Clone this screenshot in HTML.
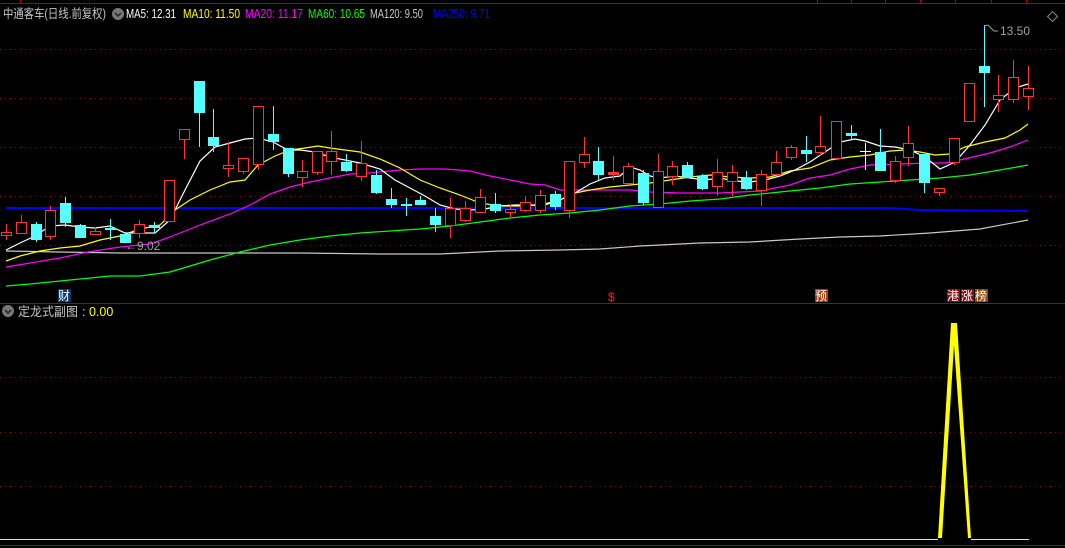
<!DOCTYPE html>
<html><head><meta charset="utf-8"><style>
html,body{margin:0;padding:0;background:#000;width:1065px;height:548px;overflow:hidden}
svg{display:block}
text{font-family:"Liberation Sans","Noto Sans CJK SC",sans-serif}
</style></head><body>
<svg width="1065" height="548" viewBox="0 0 1065 548" xmlns="http://www.w3.org/2000/svg" shape-rendering="crispEdges">
<rect width="1065" height="548" fill="#000"/>
<line x1="0" y1="3.5" x2="1065" y2="3.5" stroke="#b00000"/>
<g stroke="#b00000"><line x1="20.5" y1="0" x2="20.5" y2="3"/><line x1="817.5" y1="0" x2="817.5" y2="3"/><line x1="851.5" y1="0" x2="851.5" y2="3"/><line x1="885.5" y1="0" x2="885.5" y2="3"/><line x1="920.5" y1="0" x2="920.5" y2="3"/><line x1="955.5" y1="0" x2="955.5" y2="3"/><line x1="991.5" y1="0" x2="991.5" y2="3"/><line x1="1026.5" y1="0" x2="1026.5" y2="3"/></g>
<g stroke="#8a0000" stroke-dasharray="1 4">
<line x1="0" y1="49.5" x2="1065" y2="49.5"/><line x1="0" y1="98.5" x2="1065" y2="98.5"/><line x1="0" y1="147.5" x2="1065" y2="147.5"/><line x1="0" y1="196.5" x2="1065" y2="196.5"/><line x1="0" y1="245.5" x2="1065" y2="245.5"/>
<line x1="0" y1="377.5" x2="1065" y2="377.5"/><line x1="0" y1="432.5" x2="1065" y2="432.5"/><line x1="0" y1="486.5" x2="1065" y2="486.5"/>
</g>
<line x1="0" y1="303.5" x2="1065" y2="303.5" stroke="#b00000"/>
<line x1="0" y1="545.5" x2="1065" y2="545.5" stroke="#b00000"/>

<g fill="none" stroke-width="1.2" shape-rendering="auto">
<polyline stroke="#c8c8c8" points="6,251 60,252 120,253 180,253 300,253 380,254 440,254 500,251 560,250 600,249 640,246 700,243 750,242 800,239 840,237 880,236 930,233 980,229 1028,220"/>
<polyline stroke="#0000ff" stroke-width="2" points="6,208 888,208 920,210 1028,211"/>
<polyline stroke="#00ff00" points="6,286 30,284 60,281 90,278 110,276 140,276 170,272 190,266 210,260 240,252 270,245 300,240 330,236 360,233 390,231 420,229 450,226 480,222 510,218 540,215 570,213 600,210 630,206 660,204 690,201 720,199 750,195 780,192 800,190 820,188 850,184 880,182 910,180 940,178 970,175 1000,170 1028,165"/>
<polyline stroke="#ff00ff" points="6,267 30,263 60,258 88,252 120,247 150,244 170,237 200,225 230,214 250,205 270,194 290,187 310,182 330,178 350,174 370,173 380,172 400,170 420,169 445,169 470,171 490,176 510,180 530,184 545,185 560,190 580,190 600,190 630,190 650,192 680,193 720,193 760,191 790,185 810,178 830,175 850,169 870,165 900,164 930,163 945,163 960,160 990,153 1010,147 1028,140"/>
<polyline stroke="#ffff00" points="6,261 20,256 40,251 60,248 80,246 100,240 120,236 140,229 160,225 175,210 190,200 210,190 230,182 245,180 258,165 275,156 290,150 305,148 318,146 330,148 345,150 360,152 380,159 400,168 420,180 440,188 460,195 480,203 500,206 520,206 540,205 560,200 575,193 590,190 610,187 630,185 650,183 670,180 690,177 710,175 730,177 750,178 770,177 790,171 810,168 830,160 850,157 870,155 890,151 905,150 920,152 935,155 950,154 965,147 985,142 1005,138 1020,130 1028,124"/>
<polyline stroke="#ffffff" points="6,250 20,243 35,236 50,226 65,225 80,227 95,228 110,226 125,233 140,233 155,233 170,220 185,190 200,161 215,147 230,143 245,139 258,138 273,142 288,150 300,150 315,152 330,157 345,160 360,163 380,169 395,180 410,188 425,196 440,205 455,209 470,210 485,209 500,206 515,205 530,205 545,205 560,200 575,193 590,184 605,178 620,176 630,167 640,170 650,176 660,178 675,176 690,178 705,180 720,178 735,181 750,182 765,180 780,176 795,170 810,162 825,152 840,142 855,139 865,141 880,146 895,147 910,150 925,157 940,169 955,162 970,145 985,125 1000,100 1015,88 1028,84"/>
</g>

<g stroke="#ff3333" fill="#000">
<line x1="6.5" y1="224" x2="6.5" y2="240"/><rect x="1.5" y="232.5" width="10" height="3"/>
<line x1="21.5" y1="215" x2="21.5" y2="233"/><rect x="16.5" y="222.5" width="10" height="11"/>
<line x1="50.5" y1="206" x2="50.5" y2="240"/><rect x="45.5" y="210.5" width="10" height="26"/>
<line x1="95.5" y1="227" x2="95.5" y2="235"/><rect x="90.5" y="231.5" width="10" height="3"/>
<line x1="139.5" y1="220" x2="139.5" y2="238"/><rect x="134.5" y="224.5" width="10" height="9"/>
<rect x="164.5" y="180.5" width="10" height="41"/>
<line x1="184.5" y1="139" x2="184.5" y2="159"/><rect x="179.5" y="129.5" width="10" height="10"/>
<line x1="228.5" y1="142" x2="228.5" y2="177"/><rect x="223.5" y="165.5" width="10" height="3"/>
<line x1="243.5" y1="158" x2="243.5" y2="174"/><rect x="238.5" y="158.5" width="10" height="13"/>
<line x1="258.5" y1="106" x2="258.5" y2="170"/><rect x="253.5" y="106.5" width="10" height="58"/>
<line x1="302.5" y1="160" x2="302.5" y2="187"/><rect x="297.5" y="171.5" width="10" height="6"/>
<line x1="317.5" y1="151" x2="317.5" y2="175"/><rect x="312.5" y="151.5" width="10" height="21"/>
<line x1="331.5" y1="131" x2="331.5" y2="175"/><rect x="326.5" y="151.5" width="10" height="10"/>
<line x1="361.5" y1="141" x2="361.5" y2="181"/><rect x="356.5" y="163.5" width="10" height="13"/>
<line x1="450.5" y1="198" x2="450.5" y2="238"/><rect x="445.5" y="208.5" width="10" height="17"/>
<line x1="465.5" y1="201" x2="465.5" y2="222"/><rect x="460.5" y="208.5" width="10" height="12"/>
<line x1="480.5" y1="189" x2="480.5" y2="213"/><rect x="475.5" y="197.5" width="10" height="15"/>
<line x1="510.5" y1="205" x2="510.5" y2="218"/><rect x="505.5" y="209.5" width="10" height="3"/>
<line x1="525.5" y1="196" x2="525.5" y2="212"/><rect x="520.5" y="202.5" width="10" height="8"/>
<line x1="540.5" y1="190" x2="540.5" y2="213"/><rect x="535.5" y="195.5" width="10" height="15"/>
<line x1="569.5" y1="161" x2="569.5" y2="218"/><rect x="564.5" y="161.5" width="10" height="49"/>
<line x1="584.5" y1="137" x2="584.5" y2="168"/><rect x="579.5" y="154.5" width="10" height="8"/>
<line x1="613.5" y1="156" x2="613.5" y2="180"/><rect x="608.5" y="172.5" width="10" height="2" fill="#ff3333"/>
<line x1="628.5" y1="163" x2="628.5" y2="185"/><rect x="623.5" y="166.5" width="10" height="17"/>
<line x1="658.5" y1="154" x2="658.5" y2="208"/><rect x="653.5" y="171.5" width="10" height="36"/>
<line x1="672.5" y1="161" x2="672.5" y2="185"/><rect x="667.5" y="166.5" width="10" height="10"/>
<line x1="717.5" y1="159" x2="717.5" y2="196"/><rect x="712.5" y="172.5" width="10" height="14"/>
<line x1="732.5" y1="165" x2="732.5" y2="196"/><rect x="727.5" y="172.5" width="10" height="9"/>
<line x1="761.5" y1="170" x2="761.5" y2="206"/><rect x="756.5" y="174.5" width="10" height="16"/>
<line x1="776.5" y1="151" x2="776.5" y2="174"/><rect x="771.5" y="162.5" width="10" height="12"/>
<line x1="791.5" y1="145" x2="791.5" y2="160"/><rect x="786.5" y="147.5" width="10" height="10"/>
<line x1="820.5" y1="116" x2="820.5" y2="156"/><rect x="815.5" y="146.5" width="10" height="6"/>
<line x1="836.5" y1="121" x2="836.5" y2="160"/><rect x="831.5" y="121.5" width="10" height="37"/>
<line x1="895.5" y1="156" x2="895.5" y2="183"/><rect x="890.5" y="161.5" width="10" height="19"/>
<line x1="908.5" y1="126" x2="908.5" y2="166"/><rect x="903.5" y="143.5" width="10" height="14"/>
<line x1="939.5" y1="188" x2="939.5" y2="196"/><rect x="934.5" y="188.5" width="10" height="4"/>
<line x1="954.5" y1="138" x2="954.5" y2="165"/><rect x="949.5" y="138.5" width="10" height="24"/>
<rect x="964.5" y="83.5" width="10" height="38"/>
<line x1="998.5" y1="75" x2="998.5" y2="112"/><rect x="993.5" y="95.5" width="10" height="4"/>
<line x1="1013.5" y1="60" x2="1013.5" y2="103"/><rect x="1008.5" y="77.5" width="10" height="22"/>
<line x1="1028.5" y1="66" x2="1028.5" y2="110"/><rect x="1023.5" y="88.5" width="10" height="8"/>
</g>
<g stroke="#55ffff" fill="#55ffff">
<line x1="36.5" y1="222" x2="36.5" y2="242"/><rect x="31.5" y="224.5" width="10" height="15"/>
<line x1="65.5" y1="197" x2="65.5" y2="227"/><rect x="60.5" y="203.5" width="10" height="19"/>
<line x1="80.5" y1="224" x2="80.5" y2="237"/><rect x="75.5" y="225.5" width="10" height="12"/>
<line x1="110.5" y1="219" x2="110.5" y2="240"/><rect x="105.5" y="228.5" width="10" height="1"/>
<line x1="125.5" y1="232" x2="125.5" y2="242"/><rect x="120.5" y="234.5" width="10" height="8"/>
<line x1="154.5" y1="222" x2="154.5" y2="233"/><rect x="149.5" y="225.5" width="10" height="2"/>
<line x1="199.5" y1="81" x2="199.5" y2="147"/><rect x="194.5" y="81.5" width="10" height="31"/>
<line x1="213.5" y1="109" x2="213.5" y2="152"/><rect x="208.5" y="137.5" width="10" height="8"/>
<line x1="273.5" y1="106" x2="273.5" y2="150"/><rect x="268.5" y="134.5" width="10" height="7"/>
<line x1="288.5" y1="148" x2="288.5" y2="177"/><rect x="283.5" y="148.5" width="10" height="25"/>
<line x1="346.5" y1="154" x2="346.5" y2="172"/><rect x="341.5" y="162.5" width="10" height="8"/>
<line x1="376.5" y1="170" x2="376.5" y2="194"/><rect x="371.5" y="175.5" width="10" height="17"/>
<line x1="391.5" y1="188" x2="391.5" y2="208"/><rect x="386.5" y="199.5" width="10" height="5"/>
<line x1="406.5" y1="198" x2="406.5" y2="216"/><rect x="401.5" y="204.5" width="10" height="1"/>
<line x1="420.5" y1="196" x2="420.5" y2="205"/><rect x="415.5" y="200.5" width="10" height="4"/>
<line x1="435.5" y1="208" x2="435.5" y2="232"/><rect x="430.5" y="216.5" width="10" height="8"/>
<line x1="495.5" y1="193" x2="495.5" y2="213"/><rect x="490.5" y="204.5" width="10" height="6"/>
<line x1="555.5" y1="191" x2="555.5" y2="210"/><rect x="550.5" y="194.5" width="10" height="12"/>
<line x1="598.5" y1="147" x2="598.5" y2="180"/><rect x="593.5" y="161.5" width="10" height="13"/>
<line x1="643.5" y1="170" x2="643.5" y2="205"/><rect x="638.5" y="173.5" width="10" height="29"/>
<line x1="687.5" y1="162" x2="687.5" y2="178"/><rect x="682.5" y="165.5" width="10" height="12"/>
<line x1="702.5" y1="174" x2="702.5" y2="190"/><rect x="697.5" y="176.5" width="10" height="12"/>
<line x1="746.5" y1="171" x2="746.5" y2="190"/><rect x="741.5" y="178.5" width="10" height="10"/>
<line x1="806.5" y1="136" x2="806.5" y2="162"/><rect x="801.5" y="150.5" width="10" height="3"/>
<line x1="851.5" y1="125" x2="851.5" y2="140"/><rect x="846.5" y="133.5" width="10" height="2"/>
<line x1="880.5" y1="129" x2="880.5" y2="170"/><rect x="875.5" y="152.5" width="10" height="18"/>
<line x1="924.5" y1="154" x2="924.5" y2="193"/><rect x="919.5" y="154.5" width="10" height="28"/>
<line x1="984.5" y1="25" x2="984.5" y2="107"/><rect x="979.5" y="66.5" width="10" height="6"/>
</g>
<g stroke="#fff"><line x1="865.5" y1="143" x2="865.5" y2="170"/><line x1="860" y1="151.5" x2="871" y2="151.5"/></g>

<text x="125" y="250" font-size="12" fill="#a0a0a0">←9.02</text>
<polyline points="984,26 988,25 994,31 998,31" fill="none" stroke="#a0a0a0" shape-rendering="auto"/>
<text x="1000" y="35" font-size="12" fill="#a0a0a0">13.50</text>

<rect x="58" y="289" width="13" height="13" fill="#0a3a6a"/>
<text x="58" y="300" font-size="12" fill="#fff">财</text>
<text x="608" y="301" font-size="12" fill="#ff2020">$</text>
<rect x="815" y="289" width="13" height="13" fill="#a0400a"/>
<text x="815" y="300" font-size="12" fill="#fff">预</text>
<rect x="947" y="289" width="13" height="13" fill="#8a0a0a"/>
<text x="947" y="300" font-size="12" fill="#fff">港</text>
<rect x="961" y="289" width="13" height="13" fill="#8a0a0a"/>
<text x="961" y="300" font-size="12" fill="#fff">涨</text>
<rect x="975" y="289" width="13" height="13" fill="#8a4a0a"/>
<text x="975" y="300" font-size="12" fill="#fff">榜</text>

<text x="3" y="18" font-size="12.5" fill="#c8c8c8" textLength="103" lengthAdjust="spacingAndGlyphs">中通客车(日线.前复权)</text>
<circle cx="118" cy="14" r="6" fill="#777"/>
<polyline points="115,13 118,16 121,13" fill="none" stroke="#222" stroke-width="1.5" shape-rendering="auto"/>
<text font-size="12.5" y="18" x="126" fill="#fff" textLength="50" lengthAdjust="spacingAndGlyphs">MA5: 12.31</text>
<text font-size="12.5" y="18" x="183" fill="#ffff00" textLength="57" lengthAdjust="spacingAndGlyphs">MA10: 11.50</text>
<text font-size="12.5" y="18" x="245" fill="#ff00ff" textLength="58" lengthAdjust="spacingAndGlyphs">MA20: 11.17</text>
<text font-size="12.5" y="18" x="308" fill="#00ff00" textLength="57" lengthAdjust="spacingAndGlyphs">MA60: 10.65</text>
<text font-size="12.5" y="18" x="370" fill="#c8c8c8" textLength="53" lengthAdjust="spacingAndGlyphs">MA120: 9.50</text>
<text font-size="12.5" y="18" x="433" fill="#0000ff" textLength="57" lengthAdjust="spacingAndGlyphs">MA250: 9.71</text>
<rect x="1049" y="13" width="7" height="7" fill="none" stroke="#888" transform="rotate(45 1052.5 16.5)" shape-rendering="auto"/>

<circle cx="8" cy="311" r="6" fill="#777"/>
<polyline points="5,310 8,313 11,310" fill="none" stroke="#222" stroke-width="1.5" shape-rendering="auto"/>
<text x="18" y="316" font-size="12.5" fill="#c8c8c8" textLength="60" lengthAdjust="spacingAndGlyphs">定龙式副图</text>
<text x="82" y="316" font-size="12.5" fill="#ffff00">: 0.00</text>

<g shape-rendering="auto">
<polyline points="0,539.5 938,539.5" stroke="#ffff00" stroke-width="1" fill="none"/>
<polyline points="971,539.5 1029,539.5" stroke="#ffff00" stroke-width="1" fill="none"/>
<polygon points="951,323 957,323 971,538 968,538 954,345 942,538 938,538" fill="#ffff00"/>
</g>
</svg>
</body></html>
